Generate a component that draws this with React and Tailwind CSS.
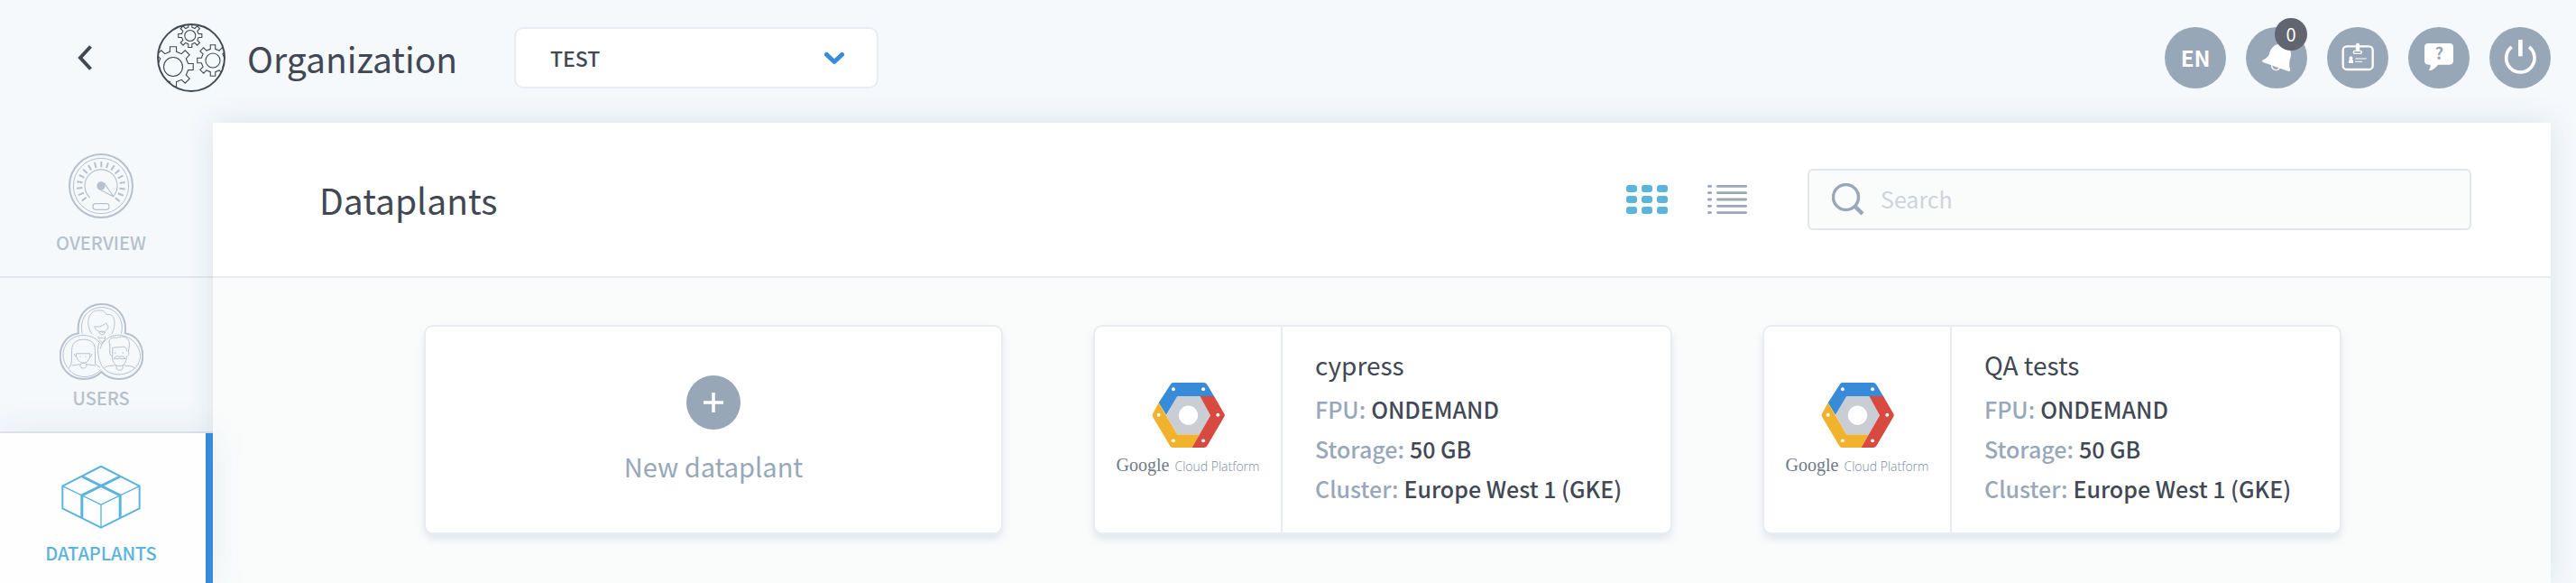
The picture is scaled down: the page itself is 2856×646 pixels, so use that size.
import React from "react";

function gearPath(cx, cy, outer, inner, teeth = 8) {
  const step = (Math.PI * 2) / teeth;
  const point = (r, a) =>
    `${(cx + r * Math.sin(a)).toFixed(2)} ${(cy - r * Math.cos(a)).toFixed(2)}`;
  let d = "";
  for (let i = 0; i < teeth; i++) {
    const a = i * step;
    d += `${i ? "L" : "M"}${point(inner, a - step * 0.27)}L${point(outer, a - step * 0.2)}`;
    d += `L${point(outer, a + step * 0.2)}L${point(inner, a + step * 0.27)}`;
  }
  return d + "Z";
}

function OrganizationIcon() {
  const gears = [
    [36.8, 13.5, 13.2, 9.5, 6],
    [18, 48, 22.5, 17, 10.5],
    [62, 41, 17.5, 13, 8],
  ];
  return (
    <svg viewBox="0 0 76 76" className="size-[76px]" fill="none" stroke="#414854" aria-hidden="true">
      <clipPath id="organization-disc">
        <circle cx="38" cy="38" r="37" />
      </clipPath>
      <g clipPath="url(#organization-disc)" strokeWidth="1.1">
        {gears.map(([x, y, outer, inner, hole]) => (
          <React.Fragment key={x}>
            <path d={gearPath(x, y, outer, inner)} />
            <circle cx={x} cy={y} r={hole} />
          </React.Fragment>
        ))}
      </g>
      <circle cx="38" cy="38" r="37" strokeWidth="1.9" />
    </svg>
  );
}

const dialTicks = Array.from({ length: 17 }, (_, i) => -128 + i * 16.1);

function OverviewIcon() {
  return (
    <svg viewBox="228 120 216 216" className="size-[72px]" fill="none" stroke="currentColor" aria-hidden="true">
      <circle cx="336" cy="228" r="105" strokeWidth="6" />
      <circle cx="336" cy="228" r="92" strokeWidth="3" />
      {dialTicks.map((a) => (
        <path key={a} d="M336 147v19" strokeWidth="6" transform={`rotate(${a} 336 228)`} />
      ))}
      <path d="M299 267A54 54 0 1 1 376 264" strokeWidth="3.500" />
      <circle cx="336" cy="228" r="14" fill="currentColor" stroke="none" />
      <path d="M346 218L378 264L332 240" strokeWidth="3.500" />
      <rect x="309" y="287" width="54" height="20" rx="9" strokeWidth="3.500" />
    </svg>
  );
}

function UsersIcon() {
  return (
    <svg viewBox="28 28 280 256" className="h-[85px] w-[93px]" fill="none" stroke="currentColor" strokeWidth="3" aria-hidden="true">
      <path
        d="M91 128C84 70 119 31 169 31S254 70 247 128C286 134 306 168 306 204C306 247 272 281 228 281C203 281 182 272 168 257C154 272 133 281 108 281C64 281 30 247 30 204C30 168 52 134 91 128Z"
        strokeWidth="6"
      />
      <path d="M104 129C92 80 124 42 169 42S246 80 234 129" />
      <path d="M60 249C20 206 42 137 108 135C135 136 152 146 167 165L182 150" />
      <path d="M160 160C151 188 158 224 176 246C216 286 294 262 298 204C295 150 228 110 181 151C172 158 167 169 164 180" />
      <path d="M60 249C82 279 133 284 166 250" />
      <path d="M136 131C113 96 123 51 160 52C176 51 181 59 185 66C214 59 219 100 202 131" />
      <path d="M145 105C160 110 176 101 183 94L191 107C185 123 174 127 168 124C158 123 145 116 145 105Z" />
      <path d="M159 126C165 120 175 120 181 127L169 134ZM158 138V147M180 138V148M160 146C166 142 173 143 179 147M161 151L170 159L180 150" />
      <path d="M58 244C70 231 68 226 69 184C69 158 88 149 108 149C133 149 147 160 147 186V231L164 243" />
      <path d="M83 196H130C130 220 118 227 107 227S83 216 83 196ZM77 197C78 206 82 207 84 205M136 197C135 206 132 207 130 205M97 232V238C99 247 116 247 118 238V231C113 227 102 227 97 232ZM69 236L95 232M119 232L147 236" />
      <path d="M197 168C186 148 205 138 219 144C239 132 264 144 261 168L258 190M196 164V190M205 207V177C216 173 226 177 240 173C250 174 253 180 252 188M196 188C194 198 200 204 204 206C204 224 213 238 228 238S252 224 252 206C258 204 262 194 257 189" />
      <path d="M209 213C215 204 222 203 228 207C235 203 243 205 248 213C240 211 234 216 228 212C222 216 217 211 209 213ZM218 236V245C221 254 237 254 239 245V236M177 245C188 234 202 238 214 235M243 235C256 239 268 234 280 246" />
      <path d="M214 192v4M240 192v4M98 205v3M115 205v3" strokeWidth="4" />
    </svg>
  );
}

function DataplantsIcon() {
  return (
    <svg viewBox="203 387 266 214" className="h-[71px] w-[88px]" fill="none" stroke="currentColor" strokeLinejoin="round" aria-hidden="true">
      <path d="M336 392L465 458V533L336 597L207 533V458Z" strokeWidth="6" />
      <path d="M207 458L336 520L465 458M336 520V597" strokeWidth="4" />
      <path d="M273 426L400 489V564M400 426L272 489V564" strokeWidth="9" />
    </svg>
  );
}

function CloudLogo() {
  return (
    <svg viewBox="139 42 244 217" className="h-[72px] w-[81px]" aria-hidden="true">
      <path d="M224 86H300L335 151L298 215H224L187 151Z" fill="#c9cdd4" />
      <path d="M203 46Q206 42 212 42H313Q320 42 323 47L347 87H224L187 150L162 109Z" fill="#388bd9" />
      <path d="M162 109L224 215H298L273 259H210Q204 259 201 255L142 156Q139 151 142 146Z" fill="#f1b32e" />
      <path d="M300 87H347L381 146Q384 151 381 156L324 253Q320 259 313 259H273L335 151Z" fill="#d84a40" />
      <g fill="#fff">
        <circle cx="261" cy="151" r="32" />
        <circle cx="211" cy="64" r="6" />
        <circle cx="311" cy="64" r="6" />
        <circle cx="162" cy="150" r="6" />
        <circle cx="360" cy="150" r="6" />
        <circle cx="211" cy="236" r="6" />
        <circle cx="311" cy="236" r="6" />
      </g>
    </svg>
  );
}

function RoundButton({ label, children }) {
  return (
    <button type="button" aria-label={label} className="relative flex size-[68px] items-center justify-center rounded-full bg-[#98a7b8] text-white">
      {children}
    </button>
  );
}

function BellIcon() {
  return (
    <svg viewBox="390 90 204 204" className="size-[68px]" aria-hidden="true">
      <path d="M445 200Q463 193 468 179C474 156 487 146 504 146C526 147 542 160 540 186Q530 210 538 235Q534 239 529 236L447 207Q442 203 445 200Z" fill="#fff" />
      <path d="M476 217C475 234 497 237 502 226" fill="none" stroke="#fff" strokeWidth="4" />
    </svg>
  );
}

function BadgeIcon() {
  return (
    <svg viewBox="660 90 204 204" className="size-[68px]" fill="none" stroke="#fff" aria-hidden="true">
      <rect x="713" y="154" width="99" height="77" rx="13" strokeWidth="7" />
      <path d="M762 150V163" strokeWidth="13" strokeLinecap="round" />
      <rect x="748" y="169" width="27" height="9" rx="4" strokeWidth="4" />
      <path d="M755 195H790M755 205H776" strokeWidth="3" strokeLinecap="round" />
      <path d="M732 210V203Q732 199 736 198A6 6 0 1 1 743 198Q747 199 747 203V210Z" fill="#fff" stroke="none" />
    </svg>
  );
}

function HelpIcon() {
  return (
    <svg viewBox="930 90 204 204" className="size-[68px]" aria-hidden="true">
      <path d="M997 144H1067Q1080 144 1080 157V202Q1080 215 1067 215H1029Q1018 231 1001 235Q998 234 1000 230Q1005 224 1004 215H997Q984 215 984 202V157Q984 144 997 144Z" fill="#fff" />
      <text x="1033" y="198" textAnchor="middle" fontSize="54" fontWeight="700" fontFamily="Noto Sans CJK SC, sans-serif" fill="#98a7b8">
        ?
      </text>
    </svg>
  );
}

function PowerIcon() {
  return (
    <svg viewBox="1200 90 204 204" className="size-[68px]" fill="none" stroke="#fff" aria-hidden="true">
      <path d="M1274 156A47 47 0 1 0 1332 156" strokeWidth="11" />
      <path d="M1303 132V187" strokeWidth="14" />
    </svg>
  );
}

function NavItem({ label, icon, active }) {
  return (
    <a
      href={`#${label.toLowerCase()}`}
      aria-current={active ? "page" : undefined}
      className={
        active
          ? "relative flex h-[172px] shrink-0 flex-col items-center border-r-8 border-[#388bd9] bg-[#fefefe] pt-7 pr-1 text-[#5ab4dc] shadow-[0_0_40px_rgba(60,70,110,0.09)]"
          : "flex h-[172px] shrink-0 flex-col items-center border-b-2 border-[#e3e6ea] pt-7 pr-3 text-[#b6c1cd]"
      }
    >
      <span className="flex h-[84px] items-center">{icon}</span>
      <span className="mt-[6px] text-[20px] leading-[30px] font-medium">{label}</span>
    </a>
  );
}

function PlantCard({ name, fpu, storage, cluster }) {
  const rows = [
    ["FPU:", fpu],
    ["Storage:", storage],
    ["Cluster:", cluster],
  ];
  return (
    <article className="flex h-[232px] rounded-[10px] border-2 border-[#e9edf1] bg-white shadow-[0_6px_8px_rgba(70,85,120,0.12)]">
      <div className="flex w-[208px] shrink-0 flex-col items-center border-r-2 border-[#e9edf1] pt-[62px]">
        <CloudLogo />
        <p className="mt-1 flex items-baseline gap-[6px] leading-[30px] whitespace-nowrap">
          <span className="font-['Liberation_Serif',serif] text-[20px] text-[#6f7a88]">Google</span>
          <span className="font-['Open_Sans',sans-serif] text-[14px] font-light text-[#7d8b9d]">Cloud Platform</span>
        </p>
      </div>
      <div className="min-w-0 pt-5 pl-9 text-[25px] leading-[44px]">
        <h2 className="mb-[5px] text-[28px]">{name}</h2>
        <dl>
          {rows.map(([term, value]) => (
            <div key={term} className="flex gap-[6px] font-medium whitespace-nowrap">
              <dt className="text-[#98a7b9]">{term}</dt>
              <dd>{value}</dd>
            </div>
          ))}
        </dl>
      </div>
    </article>
  );
}

export default function App() {
  return (
    <div className="flex h-screen flex-col overflow-hidden bg-[#f5f9fc] font-['Noto_Sans_CJK_SC','Source_Sans_Pro',sans-serif] text-[#414854]">
      <header className="flex shrink-0 items-center pt-[30px] pr-7 pb-[38px] pl-[86px]">
        <button type="button" aria-label="Back" className="flex h-7 w-4 items-center">
          <svg viewBox="0 0 16 28" className="h-7 w-4" fill="none" stroke="#414854" strokeWidth="4" aria-hidden="true">
            <path d="M14.5 1.5L3 14L14.5 26.500" />
          </svg>
        </button>
        <div className="-my-1 ml-[72px]">
          <OrganizationIcon />
        </div>
        <h1 className="ml-6 w-[272px] text-[39px] leading-[60px]">Organization</h1>
        <div className="relative ml-6 w-[404px]">
          <select aria-label="Organization" className="block h-[68px] w-full appearance-none rounded-[10px] border-2 border-[#e9edf1] bg-white pl-[38px] text-[23px] font-medium">
            <option>TEST</option>
          </select>
          <svg viewBox="0 0 22 14" className="pointer-events-none absolute top-7 right-[38px] h-[14px] w-[22px]" fill="none" stroke="#388bd9" strokeWidth="5" strokeLinecap="round" strokeLinejoin="round" aria-hidden="true">
            <path d="M2.500 2.500L11 10.500L19.500 2.500" />
          </svg>
        </div>
        <div className="ml-auto flex gap-[22px]">
          <RoundButton label="Language">
            <span className="text-[24px] leading-none font-bold">EN</span>
          </RoundButton>
          <RoundButton label="Notifications">
            <BellIcon />
            <span className="absolute -top-[10px] right-0 flex size-9 items-center justify-center rounded-full bg-[#60656f] text-[20px] leading-none">0</span>
          </RoundButton>
          <RoundButton label="Account">
            <BadgeIcon />
          </RoundButton>
          <RoundButton label="Help">
            <HelpIcon />
          </RoundButton>
          <RoundButton label="Log out">
            <PowerIcon />
          </RoundButton>
        </div>
      </header>

      <div className="flex min-h-0 flex-1 pr-7">
        <nav className="flex w-[236px] shrink-0 flex-col" aria-label="Main">
          <NavItem label="OVERVIEW" icon={<OverviewIcon />} />
          <NavItem label="USERS" icon={<UsersIcon />} />
          <NavItem label="DATAPLANTS" icon={<DataplantsIcon />} active />
        </nav>

        <main className="min-w-0 flex-1 bg-[#fafcfc] shadow-[0_0_30px_rgba(70,75,110,0.13)]">
          <div className="flex h-[172px] items-center border-b-2 border-[#e9edf1] bg-white pr-[88px] pl-[118px]">
            <h2 className="text-[39px] leading-[60px]">Dataplants</h2>
            <div className="ml-auto flex items-center gap-11">
              <button type="button" aria-label="Grid view">
                <svg viewBox="0 0 46 32" className="h-8 w-[46px]" fill="#5ab4dc" aria-hidden="true">
                  {[0, 12, 24].map((y) =>
                    [0, 17, 34].map((x) => <rect key={`${x}-${y}`} x={x} y={y} width="12" height="8" rx="3" />)
                  )}
                </svg>
              </button>
              <button type="button" aria-label="List view">
                <svg viewBox="0 0 44 32" className="h-8 w-11" fill="#98a7b9" aria-hidden="true">
                  {[0, 7.3, 14.6, 21.9, 29.2].map((y) => (
                    <React.Fragment key={y}>
                      <rect x="0" y={y} width="5" height="2.800" rx="1.400" />
                      <rect x="10" y={y} width="34" height="2.800" rx="1.400" />
                    </React.Fragment>
                  ))}
                </svg>
              </button>
            </div>
            <label className="ml-[67px] flex h-[68px] w-[736px] items-center rounded-md border-2 border-[#e2e6eb] bg-[#fafcfc] pl-[25px]">
              <svg viewBox="0 0 36 36" className="size-9 shrink-0" fill="none" stroke="#98a7b9" aria-hidden="true">
                <circle cx="15.500" cy="15.500" r="14" strokeWidth="3.400" />
                <path d="M25 25L34 34" strokeWidth="4.500" />
              </svg>
              <input type="search" aria-label="Search" placeholder="Search" className="ml-[18px] min-w-0 flex-1 bg-transparent text-[25px] outline-none placeholder:text-[#cfd4da]" />
            </label>
          </div>

          <div className="grid grid-cols-3 gap-[100px] pt-[52px] pr-[232px] pl-[234px]">
            <button type="button" className="flex h-[232px] flex-col items-center rounded-[10px] border-2 border-[#e9edf1] bg-white pt-[54px] text-[#98a7b9] shadow-[0_6px_8px_rgba(70,85,120,0.12)]">
              <span className="flex size-[60px] items-center justify-center rounded-full bg-[#98a7b8]">
                <svg viewBox="0 0 22 22" className="size-[22px]" fill="none" stroke="#fff" strokeWidth="3.500" aria-hidden="true">
                  <path d="M11 0V22M0 11H22" />
                </svg>
              </span>
              <span className="mt-[18px] text-[29px] leading-[44px]">New dataplant</span>
            </button>
            <PlantCard name="cypress" fpu="ONDEMAND" storage="50 GB" cluster="Europe West 1 (GKE)" />
            <PlantCard name="QA tests" fpu="ONDEMAND" storage="50 GB" cluster="Europe West 1 (GKE)" />
          </div>
        </main>
      </div>
    </div>
  );
}
